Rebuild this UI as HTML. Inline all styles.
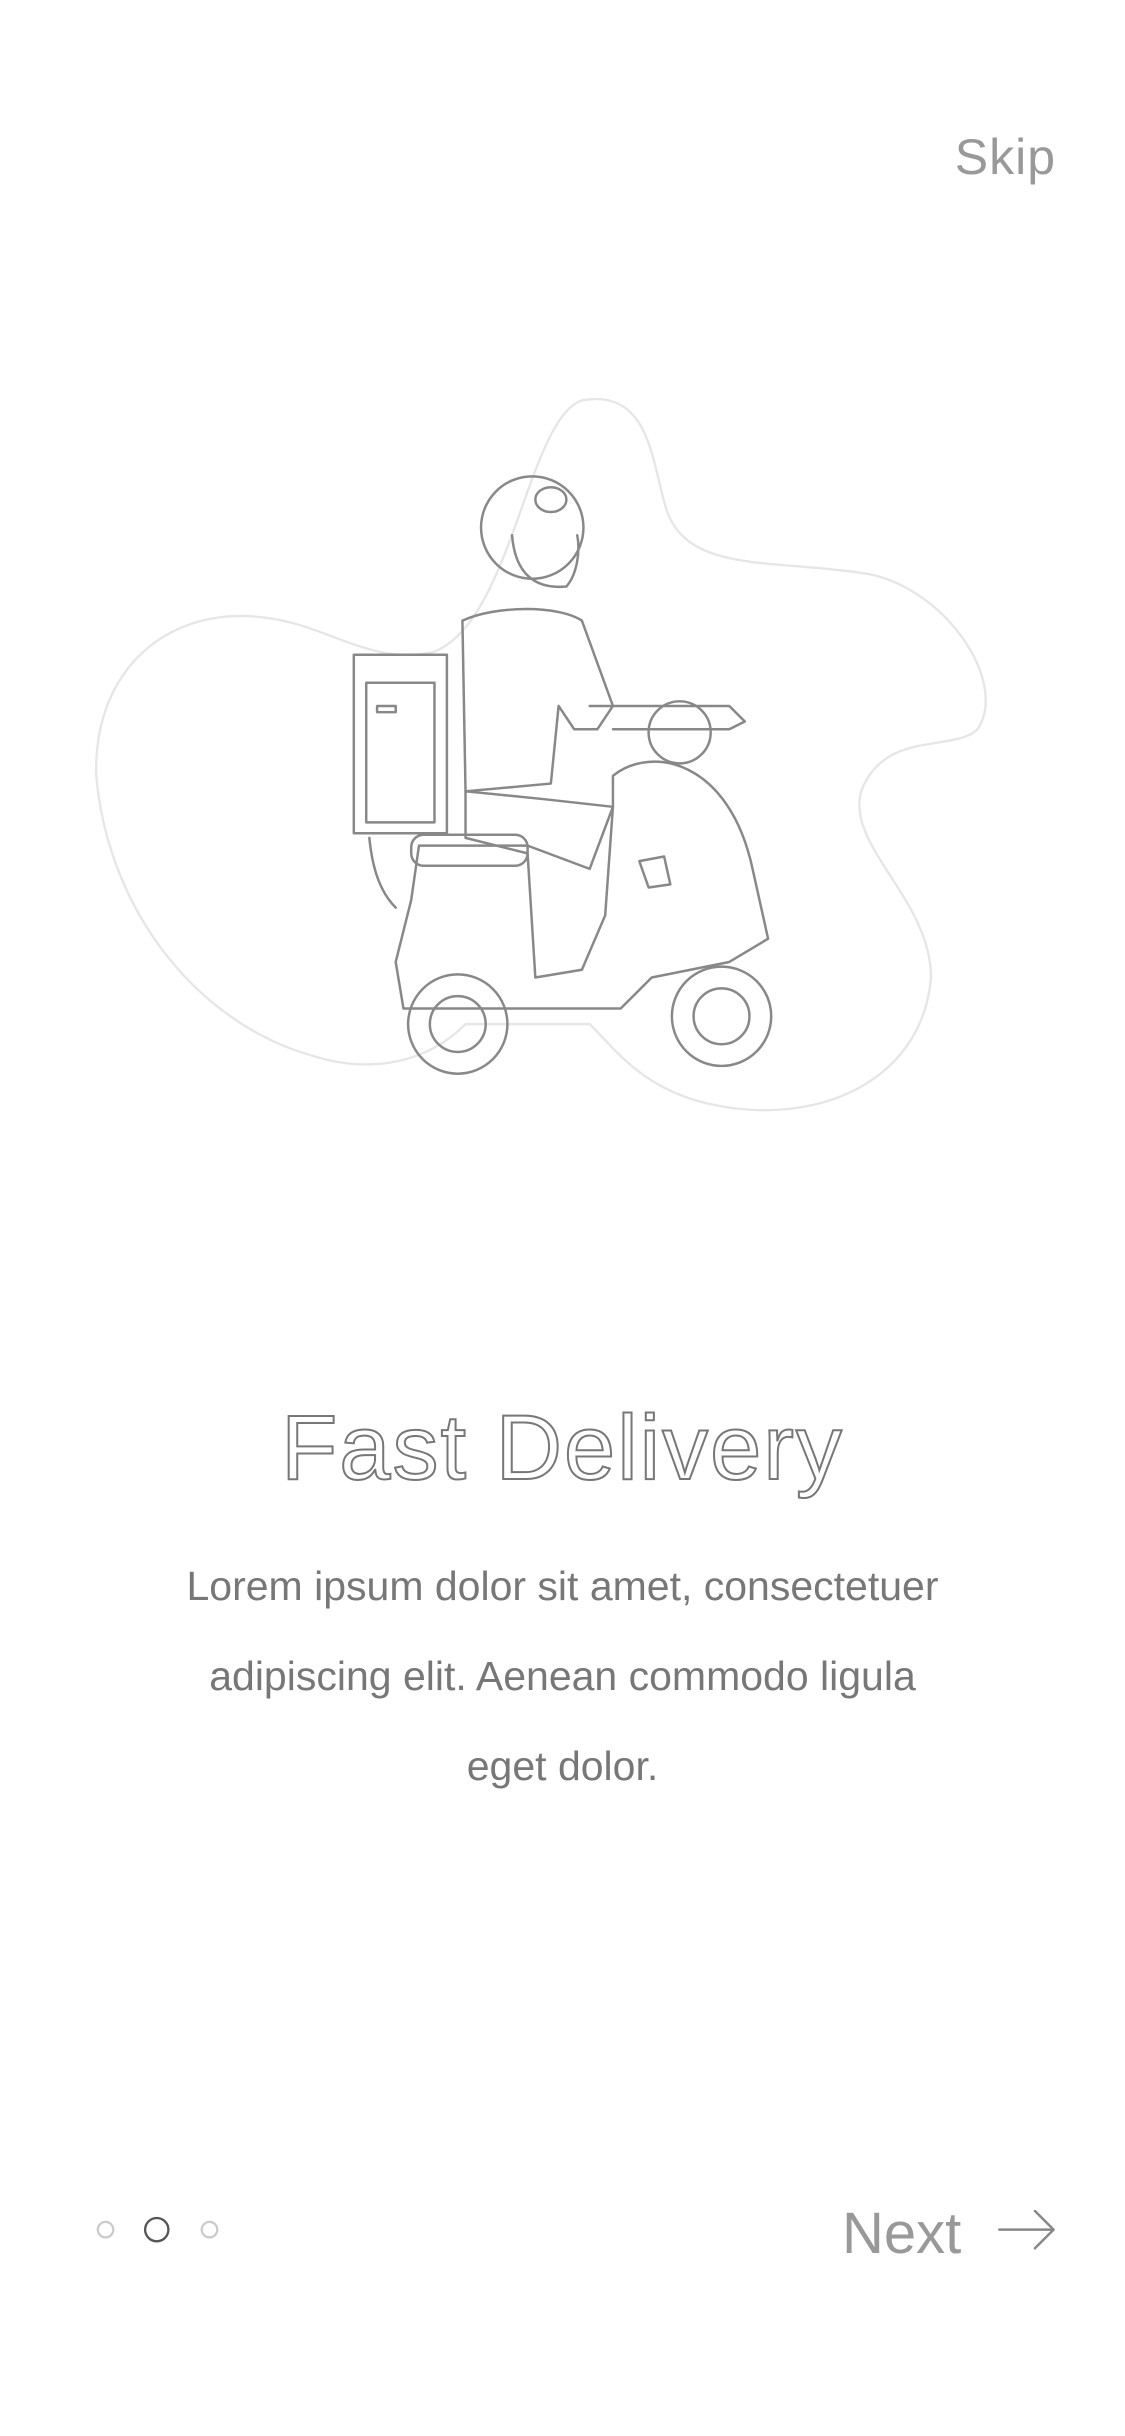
<!DOCTYPE html>
<html><head><meta charset="utf-8"><style>
html,body{margin:0;padding:0;background:#fff;}
body{width:1125px;height:2436px;position:relative;overflow:hidden;font-family:"Liberation Sans",sans-serif;}
.skip{position:absolute;right:69px;top:128px;font-size:50px;color:#999;letter-spacing:1px;}
.title{position:absolute;left:0;width:1125px;top:1396px;text-align:center;font-size:92px;letter-spacing:2px;color:#fff;-webkit-text-stroke:2px #777;}
.body{position:absolute;left:0;width:1125px;top:1541px;text-align:center;font-size:41px;line-height:90px;color:#777;}
.next{position:absolute;left:842px;top:2200px;font-size:58px;color:#999;}
svg{position:absolute;left:0;top:0;}
</style></head><body>
<svg width="1125" height="2436" viewBox="0 0 725 1570" fill="none" stroke-linecap="round" stroke-linejoin="round">
<path d="M375 258 C420 250 420 300 430 330 C445 370 500 360 560 370 C610 380 650 440 630 470 C615 485 570 470 555 510 C545 545 600 580 600 630 C595 690 540 720 480 715 C420 710 400 680 380 660 L300 660 C270 690 230 690 200 680 C130 660 70 590 62 500 C60 430 110 390 170 398 C210 402 240 430 280 420 C330 400 340 270 375 258 Z" stroke="#e6e6e6" stroke-width="1.5"/>
<g stroke="#888" stroke-width="1.6">
<circle cx="343" cy="340" r="33"/>
<ellipse cx="355" cy="322" rx="10" ry="8"/>
<path d="M330 345 C332 370 345 380 365 378 C372 370 374 355 372 345"/>
<path d="M298 400 C320 390 360 390 375 400 L395 455 L385 470 L370 470 L360 455 L355 505 L300 510 Z"/>
<rect x="228" y="422" width="60" height="115"/>
<rect x="236" y="440" width="44" height="90"/>
<rect x="243" y="455" width="12" height="4"/>
<path d="M300 510 L350 515 L395 520 L390 590 L375 625 L345 630 L340 550 L300 540 Z"/>
<path d="M380 455 L470 455 L480 465 L470 470 L395 470"/>
<circle cx="438" cy="472" r="20"/>
<path d="M395 500 C420 480 470 490 485 560 L495 605 L470 620 L420 630 L400 650 L300 650 L260 650 L255 620 L265 580 L270 545 L340 545 L380 560 L395 520 Z"/>
<rect x="265" y="538" width="75" height="20" rx="8"/>
<circle cx="295" cy="660" r="32"/>
<circle cx="295" cy="660" r="18"/>
<circle cx="465" cy="655" r="32"/>
<circle cx="465" cy="655" r="18"/>
<path d="M412 555 L428 552 L432 570 L418 572 Z"/>
<path d="M238 540 C240 560 245 575 255 585"/>
</g>
<circle cx="68" cy="1437" r="5" stroke="#ccc" stroke-width="1.5"/>
<circle cx="101" cy="1437" r="7.5" stroke="#555" stroke-width="1.5"/>
<circle cx="135" cy="1437" r="5" stroke="#ccc" stroke-width="1.5"/>
<path d="M644 1437 L679 1437 M667 1425 L679 1437 L667 1449" stroke="#888" stroke-width="1.6"/>
</svg>
<div class="skip">Skip</div>
<div class="title">Fast Delivery</div>
<div class="body">Lorem ipsum dolor sit amet, consectetuer<br>adipiscing elit. Aenean commodo ligula<br>eget dolor.</div>
<div class="next">Next</div>
</body></html>
